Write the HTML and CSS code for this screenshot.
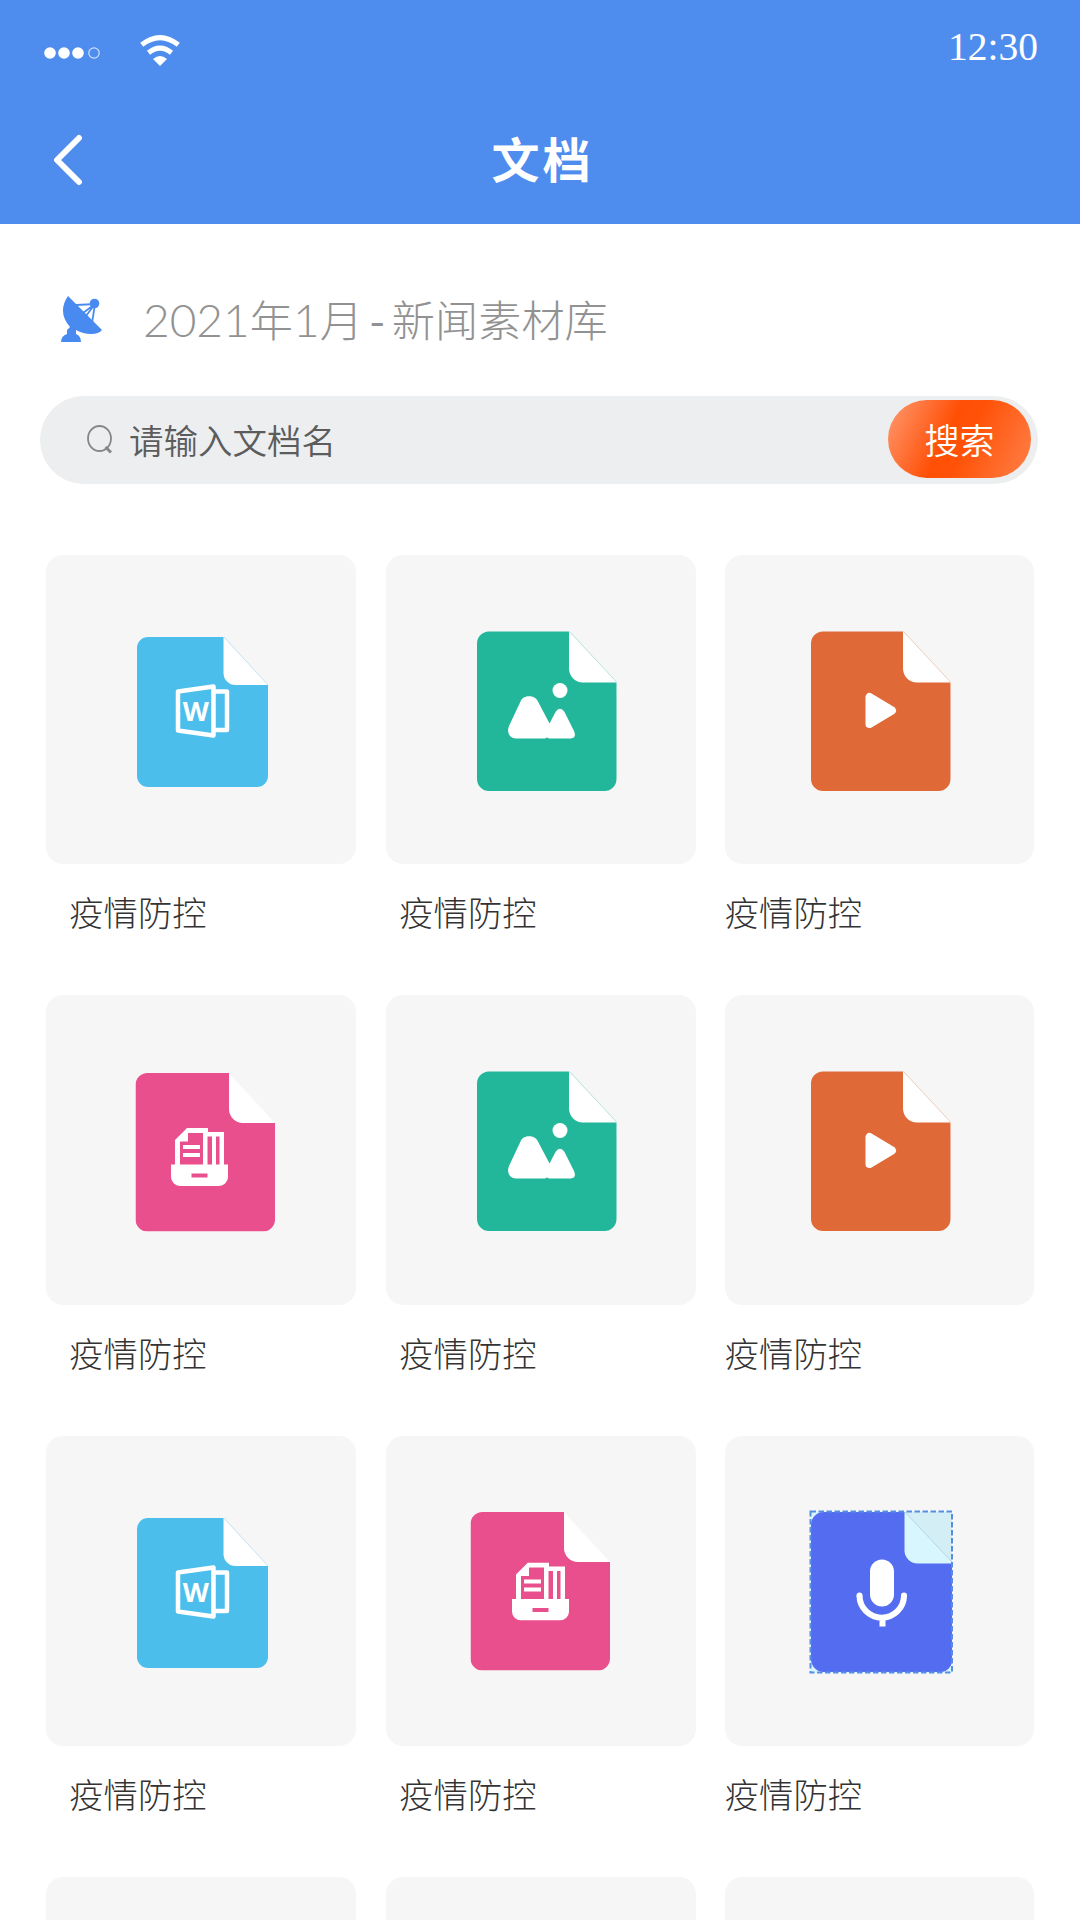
FILE: index.html
```html
<!DOCTYPE html>
<html lang="zh-CN">
<head>
<meta charset="utf-8">
<title>文档</title>
<link rel="stylesheet" href="styles.css">
</head>
<body>
<svg class="sprite" aria-hidden="true">
  <symbol id="word" viewBox="0 0 310 310">
    <path fill="#fff" d="M177 82 222 130V140H170Z"/>
    <path fill="#4bbeec" d="M102 82H177.500V118a12 12 0 0 0 12 12H222V221a11 11 0 0 1-11 11H102a11 11 0 0 1-11-11V93a11 11 0 0 1 11-11Z"/>
    <path class="crease" stroke="#4bbeec" d="M178 82 222 130"/>
    <path class="line" d="M132 136.500 167.500 131.500V180.500L132 175.500ZM167.500 136.500H181V175H167.500"/>
    <text class="w" x="149.700" y="166" text-anchor="middle">W</text>
  </symbol>
  <symbol id="picture" viewBox="0 0 310 310">
    <path fill="#fff" d="M183 76.500 230.500 127V140H175Z"/>
    <path fill="#22b79b" d="M103 76.500H183V113.500a14 14 0 0 0 14 14H230.500V224a12 12 0 0 1-12 12H103a12 12 0 0 1-12-12V88.500a12 12 0 0 1 12-12Z"/>
    <path class="crease" stroke="#22b79b" d="M183.500 76.500 230.500 127"/>
    <circle cx="174" cy="135.500" r="7.500" fill="#fff"/>
    <path fill="#fff" d="M134.500 146.500C137 139.500 149 139.500 152 146.500L163.500 168.500 169.500 157Q174 150.500 178.500 157L188 176Q191 183 184.500 183.500H163L161 182.500 159 183.500H130C123 183.500 120.500 176.500 123 171Z"/>
  </symbol>
  <symbol id="video" viewBox="0 0 310 310">
    <path fill="#fff" d="M178 76.500 225.500 127V140H170Z"/>
    <path fill="#df6a38" d="M98 76.500H178V113.500a14 14 0 0 0 14 14H225.500V224a12 12 0 0 1-12 12H98a12 12 0 0 1-12-12V88.500a12 12 0 0 1 12-12Z"/>
    <path class="crease" stroke="#df6a38" d="M178.500 76.500 225.500 127"/>
    <path fill="#fff" stroke="#fff" stroke-width="8" stroke-linejoin="round" d="M144.500 142V169L167 155.500Z"/>
  </symbol>
  <symbol id="page-pink" viewBox="0 0 140 158.500">
    <path fill="#fff" d="M93 0 139.500 50V60H85Z"/>
    <path fill="#e94f8c" d="M12 0H93.500V36a14 14 0 0 0 14 14H139.500V146.500a12 12 0 0 1-12 12H12a12 12 0 0 1-12-12V12A12 12 0 0 1 12 0Z"/>
  </symbol>
  <symbol id="drawer" viewBox="0 0 57 58">
    <path fill="#fff" fill-rule="evenodd" d="M0 36.500H4V12L16 0H37V4H53V36.500H57V49a9 9 0 0 1-9 9H9a9 9 0 0 1-9-9ZM9 13.500H17V5H32V36.500H9ZM36.500 8.500H41V36.500H36.500ZM45 8.500H48.500V36.500H45ZM20.500 45.500V49.500H36.500V45.500Z"/>
    <path fill="#fff" d="M12 17H29V21H12ZM12 25H29V29H12Z"/>
  </symbol>
  <symbol id="audio" viewBox="0 0 310 310">
    <path fill="#d8f6fe" d="M85.500 75.500H227V236.500H85.500Z"/>
    <path fill="#d3eff5" d="M180 76H227V126Z"/>
    <path stroke="#b9d3e4" fill="none" d="M180 76 227 126"/>
    <path fill="#546cef" d="M98 76H179.500V114a13 13 0 0 0 13 13.500H227V226a13 13 0 0 1-10 10H98a13 13 0 0 1-12-12V88a13 13 0 0 1 12-12Z"/>
    <path d="M85.500 75.500H227V236.500H85.500Z" fill="none" stroke="#558fe4" stroke-width="2" stroke-dasharray="5.500 2.500"/>
    <rect x="145" y="123.500" width="24" height="47" rx="12" fill="#fff"/>
    <path d="M134.500 159.500a22 22 0 0 0 44.500 0M157.500 182V190.500" fill="none" stroke="#fff" stroke-width="6"/>
    <path d="M134.500 159.500h.01M179 159.500h.01" stroke="#fff" stroke-width="6" stroke-linecap="round"/>
  </symbol>
</svg>

<header class="header">
  <div class="status">
    <svg class="signal" viewBox="0 0 58 14" fill="#fff"><circle cx="6" cy="7" r="5.800"/><circle cx="20" cy="7" r="5.800"/><circle cx="34" cy="7" r="5.800"/><circle cx="50" cy="7" r="5.200" fill="none" stroke="#cfe0fb" stroke-width="1.200"/></svg>
    <svg class="wifi" viewBox="0 0 40 32" fill="none" stroke="#fff" stroke-width="5"><path d="M1.700 9.800Q20-4.500 38.300 9.800"/><path d="M8.500 17.800Q20 8.500 31.500 17.800"/><path fill="#fff" stroke="none" d="M13 24Q20 18 27 24L20 31Z"/></svg>
    <time class="clock">12:30</time>
  </div>
  <nav class="nav">
    <svg class="back" viewBox="0 0 30 52"><path d="M26 4 4 26 26 48" fill="none" stroke="#fff" stroke-width="6" stroke-linecap="round" stroke-linejoin="round"/></svg>
    <h1 class="title">文档</h1>
  </nav>
</header>

<main class="main">
  <div class="library">
    <svg class="dish" viewBox="0 0 42 46" fill="#498af0"><path d="M7 0 41 34Q38 38 30 38Q22 38 15 34V38Q20 40 20 46H0Q0 40 6 38V34L9 31Q-4 16 7 0Z"/><circle cx="33.500" cy="7.500" r="4.800"/><path d="M15 9 34 8 22 17M34 8 25 20M34 8 31 27" fill="none" stroke="#498af0" stroke-width="1.800"/></svg>
    <p class="period"><span class="num">2021</span>年<span class="num">1</span>月<span class="dash">-</span>新闻素材库</p>
  </div>

  <form class="search">
    <svg class="lens" viewBox="0 0 26 30" fill="none" stroke="#858789" stroke-width="1.800"><ellipse cx="12.500" cy="14.500" rx="11.500" ry="12.500"/><path d="M18.500 23 24 28.500" stroke-width="3"/></svg>
    <span class="hint">请输入文档名</span>
    <button class="go" type="button">搜索</button>
  </form>

  <section class="grid">
    <article class="item"><svg class="thumb"><use href="#word" width="310" height="310"/></svg><p class="label">疫情防控</p></article>
    <article class="item"><svg class="thumb"><use href="#picture" width="310" height="310"/></svg><p class="label">疫情防控</p></article>
    <article class="item"><svg class="thumb"><use href="#video" width="310" height="310"/></svg><p class="label">疫情防控</p></article>

    <article class="item"><svg class="thumb"><use href="#page-pink" x="89.500" y="78" width="140" height="158.500"/><use href="#drawer" x="125" y="133" width="57" height="58"/></svg><p class="label">疫情防控</p></article>
    <article class="item"><svg class="thumb"><use href="#picture" width="310" height="310"/></svg><p class="label">疫情防控</p></article>
    <article class="item"><svg class="thumb"><use href="#video" width="310" height="310"/></svg><p class="label">疫情防控</p></article>

    <article class="item"><svg class="thumb"><use href="#word" width="310" height="310"/></svg><p class="label">疫情防控</p></article>
    <article class="item"><svg class="thumb"><use href="#page-pink" x="84.500" y="76" width="140" height="158.500"/><use href="#drawer" x="126" y="126.500" width="57" height="58"/></svg><p class="label">疫情防控</p></article>
    <article class="item"><svg class="thumb"><use href="#audio" width="310" height="310"/></svg><p class="label">疫情防控</p></article>

    <article class="item"><div class="thumb thumb-peek"></div></article>
    <article class="item"><div class="thumb thumb-peek"></div></article>
    <article class="item"><div class="thumb thumb-peek"></div></article>
  </section>
</main>
</body>
</html>
```

FILE: styles.css
```css
* { box-sizing: border-box; margin: 0; padding: 0; }

body {
  width: 1080px;
  height: 1920px;
  overflow: hidden;
  background: #fff;
  font-family: "Noto Sans CJK SC", sans-serif;
  font-weight: 300;
}

.sprite { display: none; }
svg { display: block; flex: none; }

.header { height: 224px; background: #4e8dee; color: #fff; }

.status { display: flex; height: 98px; padding: 0 42px 0 44px; }
.signal { width: 58px; height: 14px; margin-top: 46px; }
.wifi { width: 40px; height: 32px; margin: 35px 0 0 38px; }
.clock {
  margin: 23px 0 0 auto;
  font: 400 39.500px/48px "Liberation Serif", serif;
}

.nav {
  display: grid;
  grid-template-columns: 30px 1fr 30px;
  align-items: center;
  height: 124px;
  padding: 0 53px;
}
.back { width: 30px; height: 52px; }
.title {
  padding: 0 0 6px 5px;
  font-size: 48px;
  font-weight: 700;
  line-height: 60px;
  letter-spacing: 3px;
  text-align: center;
}

.main { padding: 0 42px 0 40px; }

.library { display: flex; align-items: center; height: 172px; padding: 17px 0 0 21px; }
.dish { width: 42px; height: 46px; }
.period {
  display: flex;
  align-items: baseline;
  margin-left: 40px;
  color: #929292;
  font-size: 43.200px;
  line-height: 60px;
}
.num { font-family: Lato, sans-serif; font-size: 46px; }
.dash { width: 29px; text-align: center; font-weight: 400; }

.search {
  display: flex;
  align-items: center;
  height: 88px;
  padding: 0 7px 2px 47px;
  border-radius: 44px;
  background: #eceeef;
}
.lens { width: 26px; height: 30px; }
.hint { flex: 1; margin-left: 16px; color: #5c5c5c; font-size: 34.500px; font-weight: 350; }
.go {
  width: 143px;
  height: 78px;
  padding-bottom: 2px;
  border: 0;
  border-radius: 39px;
  background: linear-gradient(115deg, #ff9a72 0%, #ff4f05 42%, #ff5208 55%, #ff8049 100%);
  color: #fff;
  font: inherit;
  font-size: 35px;
  font-weight: 350;
}

.grid {
  display: grid;
  grid-template-columns: 340px 338.500px 310px;
  grid-template-rows: repeat(3, 440.700px) 43px;
  margin: 70.800px 0 0 6.300px;
}
.thumb { width: 309.300px; height: 309.500px; border-radius: 17px; background: #f6f6f6; }
.thumb-peek { height: 43px; border-radius: 17px 17px 0 0; }
.label { margin: 22px 0 0 23px; color: #333; font-size: 34.300px; line-height: 50px; }
.item:nth-child(3n + 2) .label { margin-left: 13px; }
.item:nth-child(3n) .label { margin-left: 0; }

.crease { stroke-width: 1; opacity: .3; }
.line { fill: none; stroke: #fff; stroke-width: 4.500; stroke-linejoin: round; }
.w { fill: #fff; font: 700 27px "Open Sans", sans-serif; }
```
